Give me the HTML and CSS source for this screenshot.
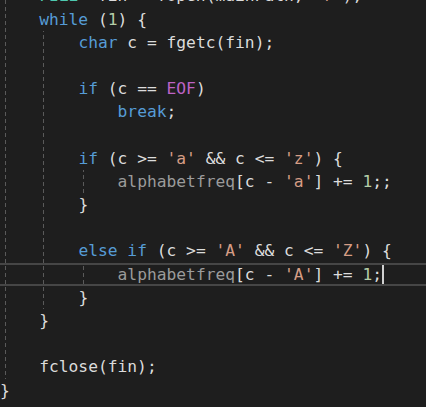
FILE: index.html
```html
<!DOCTYPE html>
<html>
<head>
<meta charset="utf-8">
<link rel="stylesheet" href="styles.css">
</head>
<body>
<div class="editor">
  <div class="line"><span class="ind g g1"></span><span class="code"><span class="ty">FILE</span>* fin = fopen(mainPath, <span class="st">"r"</span>);</span></div>
  <div class="line"><span class="ind g g1"></span><span class="code"><span class="kw">while</span> (<span class="nu">1</span>) {</span></div>
  <div class="line"><span class="ind g g1"></span><span class="ind g g2"></span><span class="code"><span class="kw">char</span> c = fgetc(fin);</span></div>
  <div class="line"><span class="ind g g1"></span><span class="ind g g2"></span></div>
  <div class="line"><span class="ind g g1"></span><span class="ind g g2"></span><span class="code"><span class="kw">if</span> (c == <span class="mac">EOF</span>)</span></div>
  <div class="line"><span class="ind g g1"></span><span class="ind g g2"></span><span class="ind"></span><span class="code"><span class="kw">break</span>;</span></div>
  <div class="line"><span class="ind g g1"></span><span class="ind g g2"></span></div>
  <div class="line"><span class="ind g g1"></span><span class="ind g g2"></span><span class="code"><span class="kw">if</span> (c &gt;= <span class="st">'a'</span> &amp;&amp; c &lt;= <span class="st">'z'</span>) {</span></div>
  <div class="line"><span class="ind g g1"></span><span class="ind g g2"></span><span class="ind g g3"></span><span class="code"><span class="gv">alphabetfreq</span>[c - <span class="st">'a'</span>] += <span class="nu">1</span>;;</span></div>
  <div class="line"><span class="ind g g1"></span><span class="ind g g2"></span><span class="code">}</span></div>
  <div class="line"><span class="ind g g1"></span><span class="ind g g2"></span></div>
  <div class="line"><span class="ind g g1"></span><span class="ind g g2"></span><span class="code"><span class="kw">else</span> <span class="kw">if</span> (c &gt;= <span class="st">'A'</span> &amp;&amp; c &lt;= <span class="st">'Z'</span>) {</span></div>
  <div class="line current"><span class="ind g g1"></span><span class="ind g g2"></span><span class="ind g g3"></span><span class="code"><span class="gv">alphabetfreq</span>[c - <span class="st">'A'</span>] += <span class="nu">1</span>;</span><span class="caret"></span></div>
  <div class="line"><span class="ind g g1"></span><span class="ind g g2"></span><span class="code">}</span></div>
  <div class="line"><span class="ind g g1"></span><span class="code">}</span></div>
  <div class="line"><span class="ind g g1"></span></div>
  <div class="line"><span class="ind g g1"></span><span class="code">fclose(fin);</span></div>
  <div class="line"><span class="code">}</span></div>
</div>
</body>
</html>
```
FILE: styles.css
```css
html, body {
  margin: 0;
  padding: 0;
  background: #1e1e1e;
  overflow: hidden;
}

.editor {
  margin-top: -15.6px;
  font-family: "DejaVu Sans Mono", "Liberation Mono", monospace;
  font-size: 16.28px;
  color: #dcdcdc;
}

.line {
  display: flex;
  align-items: stretch;
  height: 23.2px;
  line-height: 23.2px;
  white-space: pre;
  box-sizing: border-box;
}

.line.current {
  border-top: 2px solid #464646;
  border-bottom: 2px solid #464646;
  line-height: 19.2px;
}

.ind {
  width: 39.2px;
  flex: none;
}

.g {
  background-image: repeating-linear-gradient(to bottom, #5a5a5a 0 4px, transparent 4px 7px);
  background-repeat: no-repeat;
  background-size: 1px 100%;
  background-attachment: fixed;
}

.g1 { background-position: 5px 0; }
.g2 { background-position: 43px 0; }
.g3 { background-position: 83px 0; }

.code { flex: none; }

.kw { color: #569cd6; }
.nu { color: #b5cea8; }
.st { color: #d69d85; }
.mac { color: #bd63c5; }
.ty { color: #4ec9b0; }
.gv { color: #9b9b9b; }

.caret {
  width: 1.5px;
  background: #d0d0d0;
  flex: none;
}
```
